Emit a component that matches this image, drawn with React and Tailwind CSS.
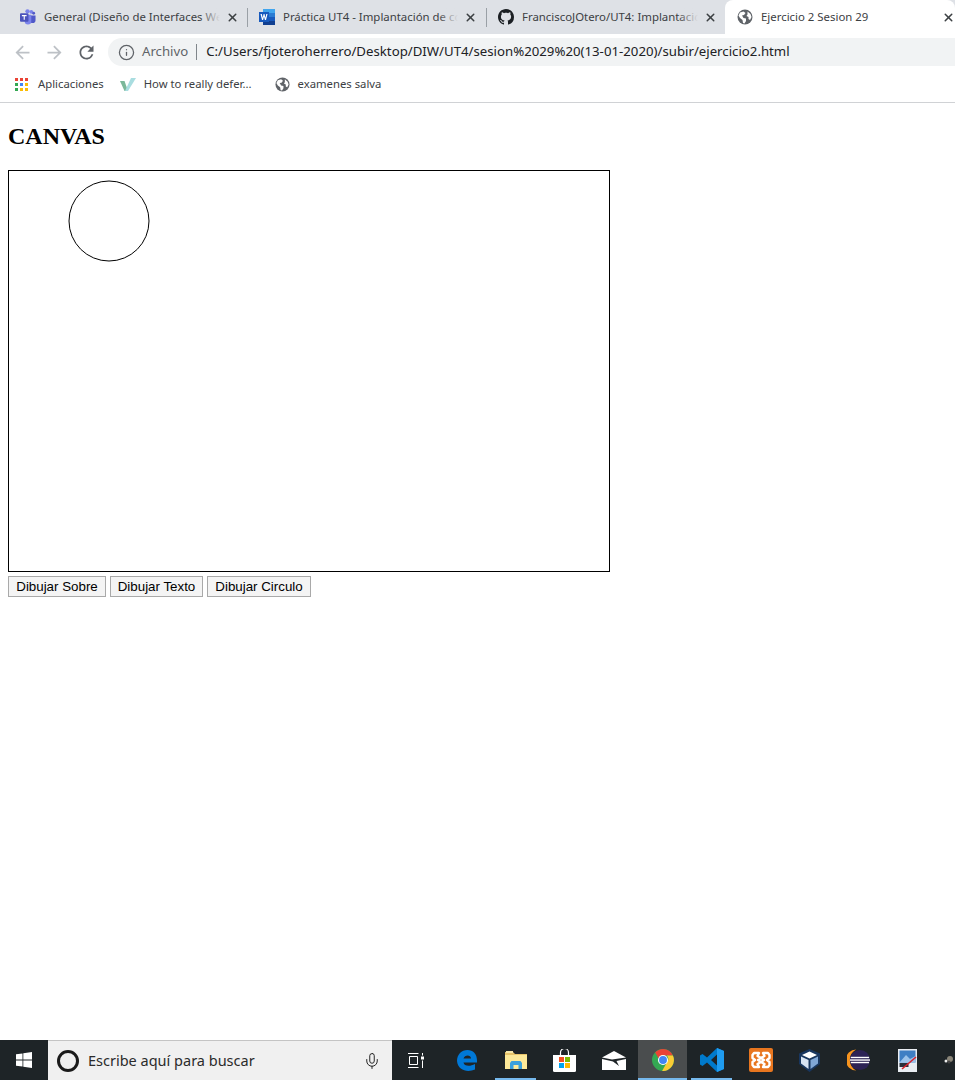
import React from "react";
import { X, Info, Mic } from "lucide-react";

const ui = { fontFamily: '"Noto Sans", "Open Sans", sans-serif' };

function Globe({ size = 16 }) {
  return (
    <svg width={size} height={size} viewBox="0 0 16 16" className="shrink-0">
      <circle cx="8" cy="8" r="7.500" fill="#5f6368" />
      <path d="M3 3.500 L6.500 2.500 L8.500 4 L7 6 L5 6.500 L6.500 9 L9 9.500 L9 12 L7.500 14.500 L6 14 L5.500 11 L3 9 L1.500 6.500 Z M10.500 2.500 L13.500 5 L14.500 8 L13 11 L11.500 10 L11.500 8 L9.500 7 L10.500 5.500 Z" fill="#fff" />
    </svg>
  );
}

function TeamsIcon() {
  return (
    <svg width="16" height="16" viewBox="0 0 17 17" className="shrink-0">
      <circle cx="12" cy="3" r="2" fill="#7b83eb" />
      <circle cx="14.500" cy="4.500" r="1.500" fill="#5059c9" />
      <path d="M10 7h6.500v5a3 3 0 0 1-6 0z" fill="#5059c9" />
      <circle cx="8" cy="2.500" r="2.300" fill="#7b83eb" />
      <path d="M5 6h7v7a3.500 3.500 0 0 1-7 0z" fill="#7b83eb" />
      <rect x="0" y="4.500" width="9" height="9" rx="1" fill="#4b53bc" />
      <path d="M2 6.500h5v1.200H5.100V11.500H3.900V7.700H2z" fill="#fff" />
    </svg>
  );
}

function WordIcon() {
  return (
    <svg width="16" height="16" viewBox="0 0 16 16" className="shrink-0">
      <rect x="4" y="0" width="12" height="4" fill="#41a5ee" />
      <rect x="4" y="4" width="12" height="4" fill="#2b7cd3" />
      <rect x="4" y="8" width="12" height="4" fill="#185abd" />
      <rect x="4" y="12" width="12" height="4" fill="#103f91" />
      <rect x="0" y="3" width="10" height="10" fill="#185abd" />
      <path d="M1.500 5h1.300l.9 3.800L4.600 5h.9l.9 3.800L7.300 5h1.200L7 11H5.900L5 7.500 4.100 11H3z" fill="#fff" />
    </svg>
  );
}

function GithubIcon() {
  return (
    <svg width="16" height="16" viewBox="0 0 16 16" className="shrink-0" fill="#1b1f23">
      <path d="M8 0C3.580 0 0 3.580 0 8c0 3.540 2.290 6.530 5.470 7.590.4.070.55-.17.55-.38 0-.19-.01-.82-.01-1.490-2.010.37-2.530-.49-2.690-.94-.09-.23-.48-.94-.82-1.130-.28-.15-.68-.52-.01-.53.63-.01 1.080.58 1.230.82.72 1.210 1.870.87 2.330.66.07-.52.28-.87.51-1.070-1.780-.2-3.640-.89-3.640-3.950 0-.87.31-1.590.82-2.150-.08-.2-.36-1.020.08-2.120 0 0 .67-.21 2.200.82.64-.18 1.320-.27 2-.27s1.360.09 2 .27c1.530-1.040 2.200-.82 2.200-.82.44 1.100.16 1.920.08 2.120.51.56.82 1.270.82 2.150 0 3.070-1.870 3.750-3.650 3.950.29.25.54.73.54 1.480 0 1.070-.01 1.930-.01 2.200 0 .21.15.46.55.38A8.010 8.010 0 0 0 16 8c0-4.420-3.580-8-8-8z" />
    </svg>
  );
}

function Tab({ icon, title, width, active, sep, closeGap }) {
  return (
    <div
      className={`relative flex h-full items-center shrink-0 ${active ? "rounded-t-lg bg-white" : ""}`}
      style={{ width }}
    >
      <div className="ml-3 flex items-center">{icon}</div>
      <div className="relative ml-2 flex-1 overflow-hidden whitespace-nowrap text-[11.4px] text-[#3c4043]">
        {title}
        {!active && (
          <span className="absolute inset-y-0 right-0 w-5 bg-linear-to-r from-transparent to-[#dee1e6]" />
        )}
      </div>
      <X size={13} strokeWidth={2.8} className={`shrink-0 text-[#3c4043] ${closeGap}`} />
      {sep && <span className="absolute -right-px top-[8px] h-[19px] w-px bg-[#9aa0a6]" />}
    </div>
  );
}

function AppsIcon() {
  const colors = ["#ea4335", "#ea4335", "#ea4335", "#34a853", "#4285f4", "#fbbc04", "#34a853", "#fbbc04", "#fbbc04"];
  return (
    <div className="grid w-[13px] shrink-0 grid-cols-3 gap-[2px]">
      {colors.map((c, i) => (
        <span key={i} className="h-[3px] w-[3px]" style={{ background: c }} />
      ))}
    </div>
  );
}

function VIcon() {
  return (
    <svg width="16" height="13" viewBox="0 0 16 13" className="block shrink-0">
      <path d="M0 3 L4.500 3 L8 13 L4.500 13 Z" fill="#7cb89a" />
      <path d="M5 13 L11 0 L16 0 L8 13 Z" fill="#a9dde0" />
    </svg>
  );
}

function TaskItem({ children, active, open }) {
  return (
    <div className={`relative flex h-full w-[49px] shrink-0 items-center justify-center ${active ? "bg-[#4a4d4e]" : ""}`}>
      {children}
      {open && <span className={`absolute bottom-0 h-0.5 bg-[#76b9ed] ${active ? "inset-x-0" : "inset-x-1"}`} />}
    </div>
  );
}

const Material = ({ d, color, size = 21 }) => (
  <svg width={size} height={size} viewBox="0 0 24 24" fill={color} className="block shrink-0">
    <path d={d} />
  </svg>
);

export default function App() {
  return (
    <div className="flex h-[1080px] w-[955px] flex-col overflow-hidden bg-white" style={ui}>
      {/* tab strip */}
      <div className="flex h-[34px] shrink-0 items-stretch bg-[#dee1e6] pl-2">
        <Tab icon={<TeamsIcon />} title="General (Diseño de Interfaces Web" width={239} sep closeGap="ml-[6px] mr-[8px]" />
        <Tab icon={<WordIcon />} title="Práctica UT4 - Implantación de co" width={239} sep closeGap="ml-[6px] mr-[9px]" />
        <Tab icon={<GithubIcon />} title="FranciscoJOtero/UT4: Implantació" width={239} closeGap="ml-[6px] mr-[8px]" />
        <Tab icon={<Globe />} title="Ejercicio 2 Sesion 29" width={230} active closeGap="mr-0" />
      </div>

      {/* toolbar */}
      <div className="flex h-[38px] shrink-0 items-center bg-white pb-[2px] pl-[12px]">
        <Material color="#bdc1c6" d="M20 11H7.830l5.590-5.590L12 4l-8 8 8 8 1.410-1.410L7.830 13H20v-2z" />
        <span className="ml-[11px]">
          <Material color="#bdc1c6" d="M12 4l-1.410 1.410L16.170 11H4v2h12.170l-5.580 5.590L12 20l8-8z" />
        </span>
        <span className="ml-[11px]">
          <Material color="#5f6368" d="M17.650 6.350A7.958 7.958 0 0 0 12 4c-4.420 0-7.990 3.580-7.990 8s3.570 8 7.990 8c3.730 0 6.840-2.550 7.730-6h-2.080A5.990 5.990 0 0 1 12 18c-3.310 0-6-2.690-6-6s2.690-6 6-6c1.660 0 3.140.69 4.220 1.780L13 11h7V4l-2.350 2.350z" />
        </span>
        <div className="ml-[11px] flex h-[28px] flex-1 items-center rounded-l-full bg-[#f1f3f4] pl-[10px]">
          <Info size={17} strokeWidth={1.8} className="text-[#5f6368]" />
          <span className="ml-[7px] text-[13.2px] text-[#5f6368]">Archivo</span>
          <span className="ml-2 h-[16px] w-px bg-[#80868b]" />
          <span className="ml-[9px] whitespace-nowrap text-[13.23px] text-[#202124]">
            C:/Users/fjoteroherrero/Desktop/DIW/UT4/sesion%2029%20(13-01-2020)/subir/ejercicio2.html
          </span>
        </div>
      </div>

      {/* bookmarks */}
      <div className="flex h-[31px] shrink-0 items-center border-b border-[#d0d2d5] bg-white pb-[6px] pl-[15px] text-[11.3px] text-[#3c4043]">
        <AppsIcon />
        <span className="ml-[10px]">Aplicaciones</span>
        <span className="ml-4"><VIcon /></span>
        <span className="ml-2">How to really defer...</span>
        <span className="ml-[23px]"><Globe size={15} /></span>
        <span className="ml-2">examenes salva</span>
      </div>

      {/* page */}
      <main className="flex-1 px-2" style={{ fontFamily: '"Liberation Serif", serif' }}>
        <h2 className="mb-5 mt-5 text-[24px] font-bold leading-[27px] text-black">CANVAS</h2>
        <div className="h-[402px] w-[602px] border border-black">
          <svg width="600" height="400" viewBox="0 0 600 400" className="block">
            <circle cx="100" cy="50" r="40" fill="none" stroke="#000" strokeWidth="1" />
          </svg>
        </div>
        <div className="mt-1 flex gap-1" style={{ fontFamily: '"Liberation Sans", sans-serif' }}>
          <button className="h-[21px] w-[98px] border border-[#a9a9a9] bg-[#f4f4f4] text-[13.33px] leading-none text-black">Dibujar Sobre</button>
          <button className="h-[21px] w-[93px] border border-[#a9a9a9] bg-[#f4f4f4] text-[13.33px] leading-none text-black">Dibujar Texto</button>
          <button className="h-[21px] w-[104px] border border-[#a9a9a9] bg-[#f4f4f4] text-[13.33px] leading-none text-black">Dibujar Circulo</button>
        </div>
      </main>

      {/* taskbar */}
      <div className="flex h-[40px] shrink-0 items-center bg-[#1e2427]">
        <div className="flex h-full w-12 shrink-0 items-center justify-center">
          <svg width="16" height="16" viewBox="0 0 16 16" fill="#fff">
            <path d="M0 2.300 6.500 1.400V7.600H0zM7.300 1.300 16 0V7.600H7.300zM0 8.400H6.500V14.600L0 13.700zM7.300 8.400H16V16L7.300 14.700z" />
          </svg>
        </div>
        <div className="flex h-full w-[344px] shrink-0 items-center border-t border-[#c4c4c4] bg-[#f0f0f0] pl-[9px] pr-[11px]">
          <span className="box-border h-[22px] w-[22px] shrink-0 rounded-full border-[3px] border-[#1a1a1a]" />
          <span className="ml-[9px] flex-1 text-[14.5px] text-[#2b2b2b]">Escribe aquí para buscar</span>
          <Mic size={18} strokeWidth={1.3} className="text-[#222]" />
        </div>
        <div className="flex h-full flex-1 items-center overflow-hidden pl-px">
          <TaskItem>
            <svg width="16" height="15" viewBox="0 0 16 15" fill="none" stroke="#fff" strokeWidth="1" className="-ml-1">
              <path d="M0 .5h10.500M0 14.500h10.500M1.500 3.500h8v8h-8zM14.500 0v2.500M14.500 7.500v7.500" />
              <rect x="13" y="3.500" width="3" height="3" fill="#fff" stroke="none" />
            </svg>
          </TaskItem>
          <TaskItem>
            <svg width="20" height="21" viewBox="0 0 20 21">
              <path d="M0 11C0 4.500 4.500 0 10.500 0 16 0 20 4 20 10.500V12.500H6.500C7 16 12.500 17 18 14V19.500C11 22.500 1 21 0 11ZM6.500 8.500H14C14 4.500 7.500 4.500 6.500 8.500Z" fill="#0078d7" />
            </svg>
          </TaskItem>
          <TaskItem open>
            <svg width="22" height="18" viewBox="0 0 22 18">
              <path d="M0 1h8l2 2h12v15H0z" fill="#e8c46a" />
              <path d="M1 0h7v2H1z" fill="#f6e6a8" />
              <path d="M0 4h22v14H0z" fill="#fde999" />
              <path d="M5 18v-6l1.500-2h9l1.500 2v6h-3.500v-4h-5v4z" fill="#3aa0dc" />
            </svg>
          </TaskItem>
          <TaskItem>
            <svg width="23" height="23" viewBox="0 0 23 23">
              <path d="M7.500 6V3.500a4 4 0 0 1 8 0V6" fill="none" stroke="#fff" strokeWidth="1.200" />
              <path d="M0 6h23v15.500A1.500 1.500 0 0 1 21.500 23h-20A1.500 1.500 0 0 1 0 21.500z" fill="#fff" />
              <rect x="6" y="8" width="5" height="5" fill="#f25022" />
              <rect x="12" y="8" width="5" height="5" fill="#7fba00" />
              <rect x="6" y="14" width="5" height="5" fill="#00a4ef" />
              <rect x="12" y="14" width="5" height="5" fill="#ffb900" />
            </svg>
          </TaskItem>
          <TaskItem>
            <svg width="24" height="19" viewBox="0 0 24 19">
              <path d="M0 6.500 12 0 24 6.500 10 8.500 0 6.500Z" fill="#fff" />
              <path d="M0 8V19H24V8L14.500 10 17 15 11 10.500Z" fill="#fff" />
            </svg>
          </TaskItem>
          <TaskItem active open>
            <svg width="22" height="22" viewBox="0 0 24 24">
              <circle cx="12" cy="12" r="12" fill="#34a853" />
              <path d="M12 0A12 12 0 0 1 22.800 7H12a5 5 0 0 0-4.700 3.300L3.400 3.800A12 12 0 0 1 12 0Z" fill="#ea4335" />
              <path d="M22.800 7A12 12 0 0 1 11 24L16.300 14.500A5 5 0 0 0 16 7Z" fill="#fbcb34" />
              <circle cx="12" cy="12" r="5.500" fill="#fff" />
              <circle cx="12" cy="12" r="4.300" fill="#4285f4" />
            </svg>
          </TaskItem>
          <TaskItem open>
            <svg width="24" height="24" viewBox="0 0 24 24">
              <path d="M17 0 24 3V21L17 24 7 14.500 2.500 18 0 16.500V7.500L2.500 6 7 9.500ZM17 6.500 11 12 17 17.500Z" fill="#007acc" />
              <path d="M17 0 24 3V21L17 24Z" fill="#1f9cf0" />
            </svg>
          </TaskItem>
          <TaskItem>
            <div className="flex h-6 w-6 items-center justify-center rounded-[2px] bg-[#e8761f]">
              <svg width="20" height="18" viewBox="0 0 20 18" fill="none" stroke="#fff" strokeWidth="2.400" strokeLinejoin="round">
                <path d="M8 2H3L1.500 4v3L4 9 1.500 11v3L3 16h5L6.500 13 10 11 7 9l3-2-3.500-2ZM12 2h5l1.500 2v3L16 9l2.500 2v3L17 16h-5l1.500-3L10 11l3-2-3-2 3.500-2Z" />
              </svg>
            </div>
          </TaskItem>
          <TaskItem>
            <svg width="21" height="23" viewBox="0 0 21 23">
              <path d="M10.500 0 21 4.500V15L10.500 23 0 15V4.500Z" fill="#18365f" />
              <path d="M10.500 2.500 18 6 10.500 9.500 3 6Z" fill="#fff" />
              <path d="M2 7.500 9.500 11V20L2 14.500Z" fill="#d7e3f2" />
              <path d="M19 7.500 11.500 11V20L19 14.500Z" fill="#7fa6d6" />
            </svg>
          </TaskItem>
          <TaskItem>
            <svg width="24" height="22" viewBox="0 0 24 24">
              <path d="M9 .5A11.500 11.500 0 0 0 9 23.500 13 13 0 0 1 9 .5Z" fill="#f7941e" />
              <circle cx="13" cy="12" r="11" fill="#2c2255" />
              <rect x="3" y="8.500" width="20" height="1.500" fill="#fff" />
              <rect x="2" y="11.300" width="22" height="1.500" fill="#fff" />
              <rect x="3" y="14" width="20" height="1.500" fill="#fff" />
            </svg>
          </TaskItem>
          <TaskItem>
            <svg width="19" height="23" viewBox="0 0 19 23">
              <rect width="19" height="23" fill="#e9edf2" />
              <rect x="1.500" y="1.500" width="16" height="12" fill="#3f7fc4" />
              <path d="M1.500 13.500 8 6l4 4 5.500-3v6.500Z" fill="#9cc3ea" />
              <rect x="1.500" y="14" width="9" height="4" fill="#2a2f3a" />
              <path d="M4 20 18 8" stroke="#d9232e" strokeWidth="1.600" />
            </svg>
          </TaskItem>
          <div className="flex h-full flex-1 items-center pl-3">
            <svg width="10" height="10" viewBox="0 0 10 10" className="shrink-0">
              <circle cx="2" cy="6" r="1.500" fill="#eee" />
              <circle cx="6" cy="4" r="3" fill="#8a8578" />
              <circle cx="5" cy="7" r="1.500" fill="#444" />
            </svg>
          </div>
        </div>
      </div>
    </div>
  );
}
